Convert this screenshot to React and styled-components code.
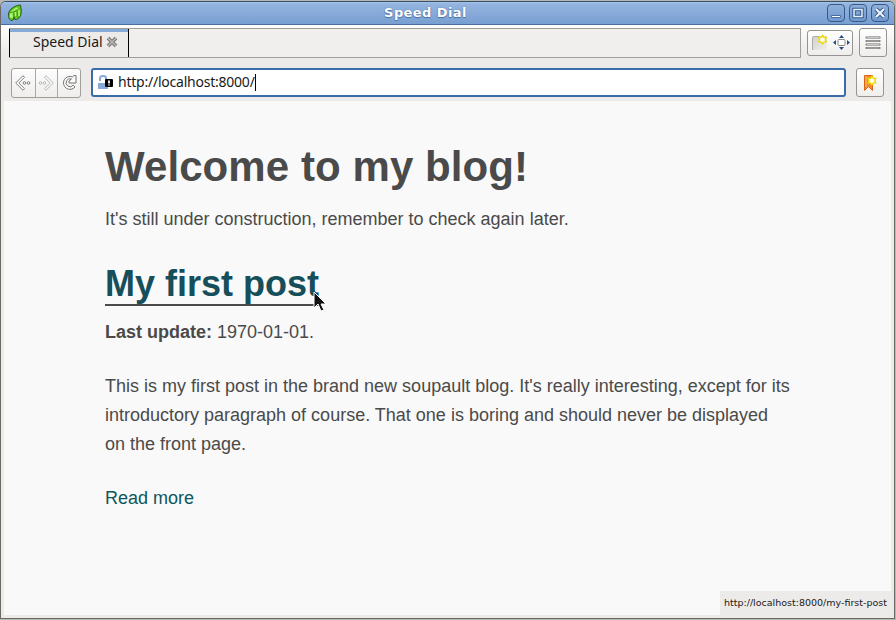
import React from "react";
import styled, { createGlobalStyle } from "styled-components";

const Global = createGlobalStyle`
  * { box-sizing: border-box; }
  html, body { margin: 0; background: #a9a9a4; overflow: hidden; }
`;

const Frame = styled.div`
  width: 896px;
  height: 620px;
  background: #b8b8b2;
  padding: 1px 1px 1px 0;
`;

const Window = styled.div`
  position: relative;
  display: flex;
  flex-direction: column;
  width: 895px;
  height: 618px;
  background: #edebe9;
  border: 1px solid #6d6a66;
  border-top-color: #35506f;
  border-radius: 6px 6px 0 0;
  overflow: hidden;
`;

const TitleBar = styled.header`
  display: grid;
  grid-template-columns: 27px 1fr 72px;
  align-items: center;
  flex: none;
  height: 23px;
  padding: 0 5px 0 6px;
  background: linear-gradient(#a8c4e8 0, #94b4df 2px, #789fd2 100%);
  border-bottom: 1px solid #4a6f9f;
`;

const WindowTitle = styled.div`
  font: bold 13px/20px "DejaVu Sans", sans-serif;
  letter-spacing: 0.42px;
  text-align: center;
  color: #fff;
  text-shadow: 0 0 1px #3e6293, 0 1px 1px #4b72a7;
`;

const WindowButtons = styled.div`
  display: flex;
  gap: 4px;
  justify-content: flex-end;
`;

const WindowButton = styled.button`
  display: grid;
  place-items: center;
  width: 18px;
  height: 18px;
  padding: 0;
  border: 1px solid #385a88;
  border-radius: 4px;
  background: linear-gradient(#8fb0dc, #7199cd);
`;

const Toolbar = styled.div`
  display: flex;
  align-items: center;
  flex: none;
  height: ${(p) => p.$height}px;
  padding: ${(p) => p.$padding};
  background: ${(p) => p.$background};
`;

const TabStrip = styled.div`
  display: flex;
  width: 792px;
  height: 30px;
  border: 1px solid #a09e9b;
  border-left: 0;
  background: #f0efee;
`;

const Tab = styled.div`
  display: flex;
  align-items: center;
  gap: 3px;
  width: 120px;
  height: 28px;
  padding: 0 0 2px 23px;
  border: solid #000;
  border-width: 0 1px;
  background: #edebe9;
  box-shadow: inset 0 3px #86abd9;
  font: 14px/20px "Noto Sans", sans-serif;
  color: #1a1a1a;
`;

const ToolButton = styled.button`
  display: flex;
  align-items: center;
  justify-content: center;
  gap: ${(p) => p.$gap || 0}px;
  width: ${(p) => p.$width}px;
  height: ${(p) => p.$height}px;
  margin-left: ${(p) => p.$left || 0}px;
  padding: 0;
  border: 1px solid #969390;
  border-radius: 3px;
  background: linear-gradient(#fff, #efeeed);
`;

const Navigation = styled.nav`
  display: flex;
  width: 70px;
  height: 30px;
  border: 1px solid #a09e9b;
  border-radius: 3px;
  background: linear-gradient(#fcfcfc, #efeeed);
`;

const NavButton = styled.button`
  display: grid;
  place-items: center;
  width: 23px;
  height: 28px;
  padding: 0;
  border: 0;
  background: transparent;
  & + & { border-left: 1px solid #aaa8a5; }
`;

const AddressBar = styled.div`
  display: flex;
  align-items: center;
  width: 755px;
  height: 29px;
  margin-left: 10px;
  padding: 0 4px;
  border: 2px solid #3a6ca9;
  border-radius: 3px;
  background: #fff;
  font: 14px/20px "Noto Sans", sans-serif;
  color: #1a1a1a;
`;

const Address = styled.span`
  margin-left: 5px;
  padding-bottom: 1px;
  letter-spacing: -0.23px;
`;

const Caret = styled.span`
  width: 1px;
  height: 17px;
  background: #000;
`;

const Page = styled.main`
  flex: 1;
  margin: 0 3px 3px 3px;
  padding: 36px 90px 0 101px;
  background: #f9f9f9;
  font: 18px/29px "Liberation Sans", sans-serif;
  color: #4a4a4a;
`;

const Heading = styled.h1`
  margin: 0 0 8px;
  font-size: 42px;
  line-height: 60px;
  letter-spacing: 0.08px;
`;

const PostHeading = styled.h2`
  display: table;
  margin: 29px 0 12px;
  height: 43px;
  border-bottom: 2px solid #4a4a4a;
  font-size: 36px;
  line-height: 41px;
  color: #164e5a;
`;

const Paragraph = styled.p`
  margin: 0 0 ${(p) => p.$after || 0}px;
  white-space: nowrap;
`;

const PageLink = styled.a`
  color: #0d565c;
`;

const LinkStatus = styled.div`
  position: absolute;
  right: 0;
  bottom: 2px;
  width: 174px;
  height: 25px;
  padding-left: 4px;
  background: #edebe9;
  font: 9.5px/24px "DejaVu Sans", sans-serif;
  color: #1a1a1a;
  white-space: nowrap;
`;

const Pointer = styled.svg`
  position: absolute;
  left: 312px;
  top: 289px;
`;

const Leaf = () => (
  <svg width="16" height="18" viewBox="0 0 16 18">
    <path d="M13.5 1C8 1.500 2 5 1.500 10c-.3 3.500 1 6.500 3.500 6.500l1.500-1 .5-2.500 1 2.500h1.500c4-1.500 5-5.500 4.700-9.500Z" fill="#62c91d" stroke="#285a20" />
    <path d="M3.500 13.500q-.8-6 7-9.500M5 14V9.500M8.500 12V8M12 12V6" fill="none" stroke="#b6f577" strokeWidth="1.5" />
    <path d="M2.500 9 11 6.500M6.800 13V9.500M10.300 13V8" fill="none" stroke="#37851c" strokeWidth=".8" />
  </svg>
);

const Minimize = () => (
  <svg width="12" height="12"><path d="M1.5 8.5h9v2h-9z" fill="#fff" stroke="#456da2" /></svg>
);
const Maximize = () => (
  <svg width="12" height="12"><path d="M2 2.5h8v7H2z" fill="none" stroke="#355b8e" strokeWidth="3.4" /><path d="M2 2.5h8v7H2z" fill="none" stroke="#e7effa" strokeWidth="1.5" /></svg>
);
const CloseWindow = () => (
  <svg width="14" height="14"><path d="m3 3 8 8M11 3l-8 8" stroke="#355b8e" strokeWidth="4" /><path d="m3 3 8 8M11 3l-8 8" stroke="#eef4fc" strokeWidth="2.2" /></svg>
);
const CloseTab = () => (
  <svg width="12" height="12"><path d="m2 2 8 8M10 2l-8 8" stroke="#777" strokeWidth="3.8" /><path d="m2 2 8 8M10 2l-8 8" stroke="#b8b7b5" strokeWidth="1.6" /></svg>
);

const Arrow = ({ forward }) => (
  <svg width="18" height="18" viewBox="0 0 18 18" opacity={forward ? 0.5 : 1}>
    <g transform={forward ? "translate(18 0) scale(-1 1)" : undefined} fill="#fff" stroke="#706f6d" strokeWidth=".9">
      <path d="M9 1.7 1.700 9 9 16.300l1.500-1.600L4.800 9l5.700-5.700Z" />
      <circle cx="10.500" cy="9" r="1.300" /><circle cx="14.500" cy="9" r="1.300" />
    </g>
  </svg>
);

const Reload = () => (
  <svg width="17" height="17" viewBox="0 0 17 17" fill="none">
    <path d="M11.500 2.900A6.500 6.500 0 1 0 14 13l-1.800-1.800A4 4 0 1 1 10.500 5L8 7v2h7V1.500h-2Z" fill="#fafafa" stroke="#777573" />
  </svg>
);

const Lock = () => (
  <svg width="16" height="16">
    <path d="M3 6V3q0-2 3-2t3 2v5" fill="none" stroke="#86a9d8" strokeWidth="2" />
    <path d="M1 8h10v6H1z" fill="#86a9d8" />
    <rect x="8" y="4" width="8" height="8" rx="1" />
    <path d="M12 5.5v3M12 9.5v1" stroke="#fff" strokeWidth="1.8" />
  </svg>
);

const Star = ({ x, y }) => (
  <path transform={`translate(${x} ${y})`} d="m4.5 .5 1.3 1.8 2.3.2-.8 2.2.8 2-2.2.4-1.4 1.5L3 7.1.8 6.7l.8-2-.8-2.2 2.3-.2Z" fill="#fffef5" stroke="#eedc00" strokeWidth="1.5" />
);
const NewTab = () => (
  <svg width="17" height="18">
    <defs><linearGradient id="new-page" x2="1" y2="1"><stop stopColor="#d0d0cb" /><stop offset="1" stopColor="#eeeeea" /></linearGradient></defs>
    <path d="M1 16V4q0-2 2-2h13v14Z" fill="url(#new-page)" /><path d="M1.5 16V4.5q0-2 2-2H8" fill="none" stroke="#aaa" />
    <Star x={7} y={1} />
  </svg>
);
const Move = () => (
  <svg width="17" height="17">
    <rect x="5" y="5.5" width="7" height="6" rx="1" fill="#fff" stroke="#888" />
    <path d="m8.5 1 2.5 3H6ZM8.5 16l2.5-3H6ZM0 8.5 3 6v5ZM17 8.5 14 6v5Z" fill="#244c87" />
  </svg>
);
const Menu = () => (
  <svg width="16" height="14">
    {[1.5, 5, 8.5, 12].map((y) => (
      <g key={y}>
        <path d={`M1.5 ${y}h13`} stroke="#696866" strokeWidth="2.2" strokeLinecap="round" />
        <path d={`M1.5 ${y}h13`} stroke="#e2e1df" strokeWidth=".8" />
      </g>
    ))}
  </svg>
);
const Bookmark = () => (
  <svg width="14" height="18">
    <path d="M1.5 1.5h8v15l-4-4-4 4Z" fill="#f58b2b" stroke="#da6515" /><path d="M3 2v11" stroke="#ffc37c" />
    <Star x={4.5} y={2} />
  </svg>
);

export default function App() {
  return (
    <Frame>
      <Global />
      <Window>
        <TitleBar>
          <Leaf />
          <WindowTitle>Speed Dial</WindowTitle>
          <WindowButtons>
            <WindowButton aria-label="Minimize"><Minimize /></WindowButton>
            <WindowButton aria-label="Maximize"><Maximize /></WindowButton>
            <WindowButton aria-label="Close"><CloseWindow /></WindowButton>
          </WindowButtons>
        </TitleBar>
        <Toolbar $height={38} $padding="0 7px 3px 8px" $background="linear-gradient(#fff, #edebe9 28px)">
          <TabStrip><Tab>Speed Dial<CloseTab /></Tab></TabStrip>
          <ToolButton $width={46} $height={26} $left={6} $gap={5}><NewTab /><Move /></ToolButton>
          <ToolButton $width={28} $height={29} $left={6} aria-label="Menu"><Menu /></ToolButton>
        </Toolbar>
        <Toolbar $height={38} $padding="1px 10px 0 10px" $background="#edebe9">
          <Navigation>
            <NavButton aria-label="Back"><Arrow /></NavButton>
            <NavButton aria-label="Forward"><Arrow forward /></NavButton>
            <NavButton aria-label="Reload"><Reload /></NavButton>
          </Navigation>
          <AddressBar><Lock /><Address>http://localhost:8000/</Address><Caret /></AddressBar>
          <ToolButton $width={28} $height={29} $left={10} aria-label="Bookmark"><Bookmark /></ToolButton>
        </Toolbar>
        <Page>
          <Heading>Welcome to my blog!</Heading>
          <Paragraph>It's still under construction, remember to check again later.</Paragraph>
          <PostHeading>My first post</PostHeading>
          <Paragraph $after={25}><strong>Last update:</strong> 1970-01-01.</Paragraph>
          <Paragraph $after={25}>
            This is my first post in the brand new soupault blog. It's really interesting, except for its<br />
            introductory paragraph of course. That one is boring and should never be displayed<br />
            on the front page.
          </Paragraph>
          <Paragraph><PageLink>Read more</PageLink></Paragraph>
        </Page>
        <LinkStatus>http://localhost:8000/my-first-post</LinkStatus>
        <Pointer width="14" height="22" viewBox="0 0 14 22">
          <path d="M1 1v16l4-4 3 7 3-1-3-6h5Z" fill="#111" stroke="#fff" />
        </Pointer>
      </Window>
    </Frame>
  );
}
